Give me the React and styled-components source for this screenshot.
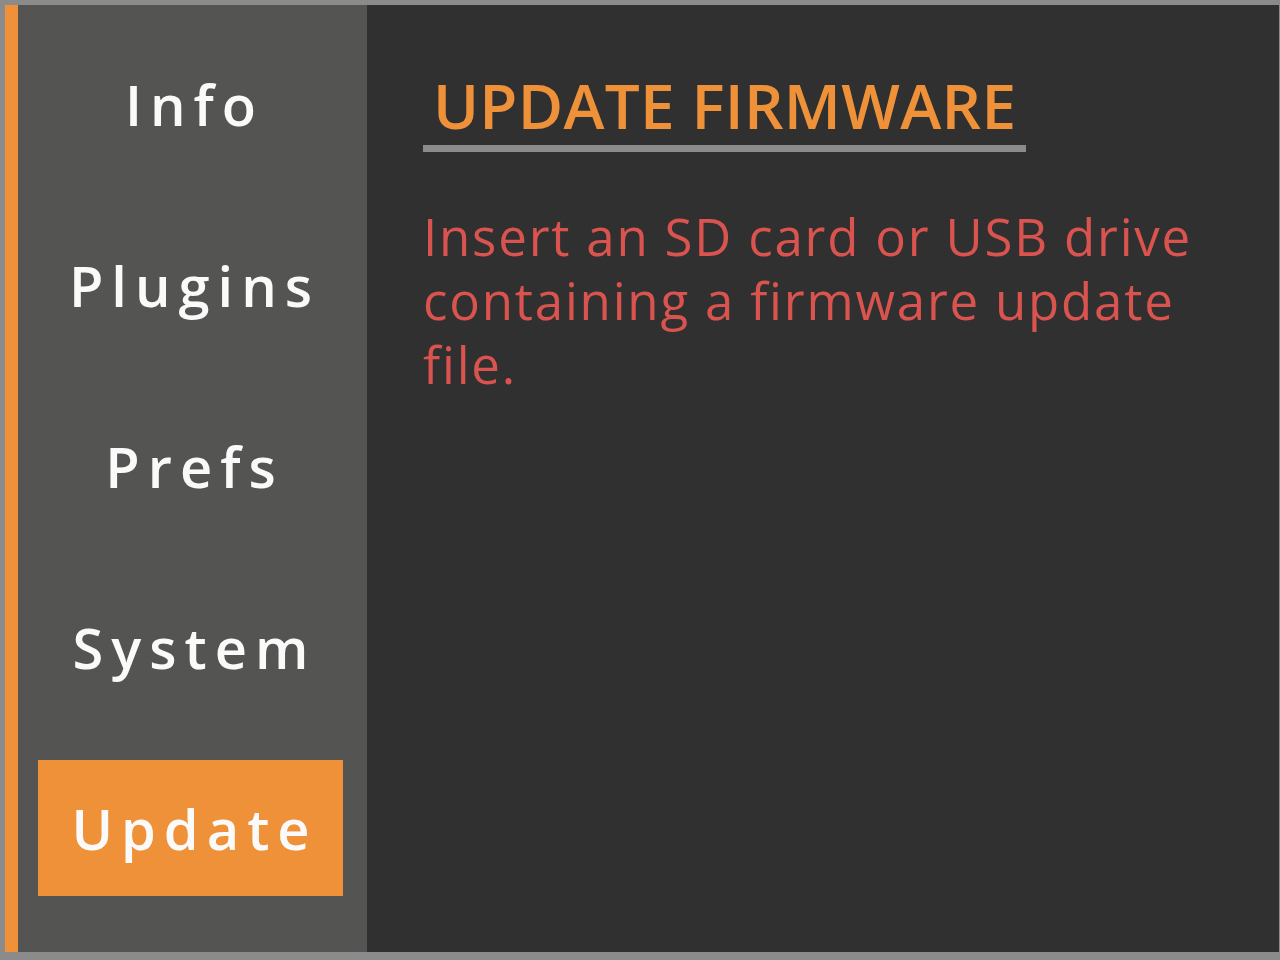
import React from 'react'
import styled, { createGlobalStyle } from 'styled-components'

const GlobalStyle = createGlobalStyle`
  html, body {
    margin: 0;
    padding: 0;
    background: #8b8b8b;
  }
  * { box-sizing: border-box; }
`;

const Screen = styled.div`
  width: 1280px;
  height: 960px;
  display: flex;
  border-style: solid;
  border-color: #8b8b8b;
  border-width: 5px 7px 8px 5px;
  border-bottom-left-radius: 10px;
  background: #8b8b8b;
  font-family: "Open Sans", "DejaVu Sans", sans-serif;
`;

const Accent = styled.div`
  width: 13px;
  flex-shrink: 0;
  background: #ee9139;
`;

const Sidebar = styled.nav`
  width: 349px;
  flex-shrink: 0;
  background: #545552;
  padding-top: 10px;
  display: flex;
  flex-direction: column;
`;

const Item = styled.div`
  height: 181px;
  padding: 21px 24px 24px 20px;
  display: flex;
`;

const ItemLabel = styled.div`
  flex: 1;
  display: flex;
  align-items: center;
  justify-content: center;
  padding-left: 8px;
  background: ${p => (p.active ? '#ee9139' : 'transparent')};
  color: #fafafa;
  font-size: 56px;
  font-weight: 600;
  letter-spacing: 8px;
`;

const Content = styled.main`
  flex: 1;
  background: #303030;
  padding: 62px 56px 0 56px;
`;

const Title = styled.h1`
  display: inline-block;
  margin: 0;
  padding: 0 10px 2px 10px;
  border-bottom: 7px solid #8b8b8b;
  color: #ee9139;
  font-size: 62px;
  font-weight: 600;
  letter-spacing: 0.3px;
  line-height: 76px;
`;

const Message = styled.p`
  margin: 52px 0 0 0;
  width: 800px;
  color: #d9534f;
  font-size: 51px;
  letter-spacing: 1.8px;
  line-height: 64px;
`;

const menu = ['Info', 'Plugins', 'Prefs', 'System', 'Update'];

export default function App() {
  return (
    <>
      <GlobalStyle />
      <Screen>
        <Accent />
        <Sidebar>
          {menu.map(name => (
            <Item key={name}>
              <ItemLabel active={name === 'Update'}>{name}</ItemLabel>
            </Item>
          ))}
        </Sidebar>
        <Content>
          <Title>UPDATE FIRMWARE</Title>
          <Message>Insert an SD card or USB drive containing a firmware update file.</Message>
        </Content>
      </Screen>
    </>
  )
}
